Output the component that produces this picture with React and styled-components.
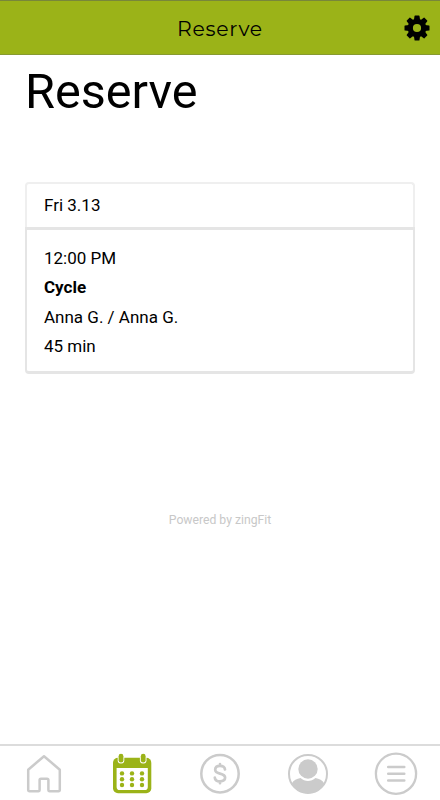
import React, { useState } from "react";
import styled, { createGlobalStyle } from "styled-components";

const GlobalStyle = createGlobalStyle`
  * {
    box-sizing: border-box;
  }
  body {
    margin: 0;
    background: #fff;
    color: #000;
    font-family: Roboto, "Liberation Sans", sans-serif;
  }
`;

const Screen = styled.div`
  display: flex;
  flex-direction: column;
  height: 100vh;
  min-height: 800px;
`;

const Header = styled.header`
  display: grid;
  grid-template-columns: 46px 1fr 46px;
  align-items: center;
  height: 55px;
  background: #9bb318;
  border-top: 1px solid #78873a;
  border-bottom: 1px solid #879a31;
`;

const HeaderTitle = styled.div`
  grid-column: 2;
  padding-top: 3px;
  text-align: center;
  font-family: Montserrat, Inter, sans-serif;
  font-size: 20.4px;
  font-weight: 400;
  line-height: 24px;
  letter-spacing: 0.7px;
`;

const IconButton = styled.button`
  display: flex;
  justify-content: center;
  align-items: center;
  padding: 1px 0 0;
  border: none;
  background: none;
  cursor: pointer;
`;

const Content = styled.main`
  flex: 1;
  padding: 7px 25px 0;
`;

const PageTitle = styled.h1`
  margin: 0 0 60px;
  font-size: 48.6px;
  font-weight: 400;
  line-height: 60px;
`;

const Card = styled.section`
  height: 192px;
`;

const CardHeader = styled.div`
  height: 45px;
  padding: 7px 17px;
  border: 2px solid #efefef;
  border-bottom: none;
  border-radius: 4px 4px 0 0;
  font-size: 17px;
  line-height: 28px;
`;

const CardBody = styled.div`
  height: 147px;
  padding: 14px 17px;
  border: solid #e5e5e5;
  border-width: 3px 2px;
  border-radius: 0 0 4px 4px;
`;

const Line = styled.div`
  font-size: 17px;
  line-height: 29.4px;
  font-weight: ${(props) => (props.$bold ? 700 : 400)};
`;

const Powered = styled.p`
  margin: 136px 0 0;
  text-align: center;
  font-size: 12.2px;
  line-height: 20px;
  color: #c8c8c8;
`;

const TabBar = styled.nav`
  display: grid;
  grid-template-columns: repeat(5, 1fr);
  height: 56px;
  padding-top: 2px;
  border-top: 2px solid #dcdcdc;
`;

const Tab = styled.button`
  display: flex;
  justify-content: center;
  align-items: center;
  padding: 0;
  border: none;
  background: none;
  color: ${(props) => (props.$active ? "#9bb318" : "#cbcbcb")};
  cursor: pointer;
`;

const Icon = styled.svg`
  display: block;
  width: 44px;
  height: 44px;
  fill: none;
  stroke: currentColor;
  stroke-width: 2.5;
  stroke-linecap: round;
  stroke-linejoin: round;
`;

const Gear = styled.svg`
  display: block;
  width: 26px;
  height: 26px;
`;

const GearIcon = () => (
  <Gear viewBox="-13 -13 26 26">
    <circle r="6.7" fill="none" stroke="#000" strokeWidth="5.2" />
    {[0, 45, 90, 135, 180, 225, 270, 315].map((angle) => (
      <path
        key={angle}
        d="M-3.1 -8 L-2.5 -12 Q-2.4 -12.5 -1.9 -12.5 H1.9 Q2.4 -12.5 2.5 -12 L3.1 -8Z"
        transform={`rotate(${angle})`}
      />
    ))}
  </Gear>
);

const HomeIcon = () => (
  <Icon viewBox="0 0 44 44">
    <path d="M22 4.2 L6.2 17.7 V37.8 Q6.2 39.2 7.6 39.2 H16.3 Q17.6 39.2 17.6 37.8 V28 Q17.6 26.7 19 26.7 H25 Q26.4 26.7 26.4 28 V37.8 Q26.4 39.2 27.7 39.2 H36.4 Q37.8 39.2 37.8 37.8 V17.7Z" />
  </Icon>
);

const CalendarIcon = () => (
  <Icon viewBox="0 0 44 44">
    <rect x="3" y="5.7" width="38.3" height="35.6" rx="5" fill="currentColor" stroke="none" />
    <path
      d="M6.6 16 H37.8 V35 Q37.8 38.1 34.7 38.1 H9.7 Q6.6 38.1 6.6 35Z"
      fill="#fff"
      stroke="none"
    />
    {[11, 33.2].map((x) => (
      <g key={x}>
        <path d={`M${x} 4.2 V8.2`} stroke="#fff" strokeWidth="6.6" />
        <path d={`M${x} 4.2 V8.2`} strokeWidth="4.8" />
      </g>
    ))}
    {[21.4, 27.2, 33].map((y) =>
      [12, 22, 32].map((x) => (
        <circle key={`${x}-${y}`} cx={x} cy={y} r="2.2" fill="currentColor" stroke="none" />
      ))
    )}
  </Icon>
);

const DollarIcon = () => (
  <Icon viewBox="0 0 44 44">
    <circle cx="22" cy="21.7" r="18.7" />
    <path
      d="M27 17.5 C26.7 15 24.8 13.9 22 13.9 C19 13.9 17.2 15.5 17.2 17.7 C17.2 20.2 19.1 20.9 22 21.6 C25.2 22.4 27.1 23.2 27.1 25.6 C27.1 28 25.1 29.4 22 29.4 C18.9 29.4 17 28 16.8 25.6 M22 12.2 V13.8 M22 29.5 V31.2"
      strokeWidth="2.7"
    />
  </Icon>
);

const UserIcon = () => (
  <Icon viewBox="0 0 44 44">
    <circle cx="22" cy="21.9" r="19" strokeWidth="2" />
    <circle cx="22" cy="17" r="9.7" fill="currentColor" stroke="none" />
    <path
      d="M5.8 31.5 C7.5 28.2 10.8 26.9 14.6 26 C18.6 30 25.4 30 29.4 26 C33.2 26.9 36.5 28.2 38.2 31.5 C35 37.6 29 41.3 22 41.3 C15 41.3 9 37.6 5.8 31.5Z"
      fill="currentColor"
      stroke="none"
    />
  </Icon>
);

const MenuIcon = () => (
  <Icon viewBox="0 0 44 44">
    <circle cx="22" cy="21.7" r="20.1" strokeWidth="2.3" />
    <path d="M14.2 15 H30.3 M14.2 21.7 H30.3 M14.2 28.4 H30.3" strokeWidth="2.5" />
  </Icon>
);

const tabs = [
  { name: "Home", icon: HomeIcon },
  { name: "Reserve", icon: CalendarIcon },
  { name: "Buy", icon: DollarIcon },
  { name: "Account", icon: UserIcon },
  { name: "Menu", icon: MenuIcon },
];

const App = () => {
  const [active, setActive] = useState("Reserve");

  return (
    <Screen>
      <GlobalStyle />
      <Header>
        <HeaderTitle>Reserve</HeaderTitle>
        <IconButton>
          <GearIcon />
        </IconButton>
      </Header>
      <Content>
        <PageTitle>Reserve</PageTitle>
        <Card>
          <CardHeader>Fri 3.13</CardHeader>
          <CardBody>
            <Line>12:00 PM</Line>
            <Line $bold>Cycle</Line>
            <Line>Anna G. / Anna G.</Line>
            <Line>45 min</Line>
          </CardBody>
        </Card>
        <Powered>Powered by zingFit</Powered>
      </Content>
      <TabBar>
        {tabs.map(({ name, icon: TabIcon }) => (
          <Tab key={name} $active={active === name} onClick={() => setActive(name)}>
            <TabIcon />
          </Tab>
        ))}
      </TabBar>
    </Screen>
  );
};

export default App;
